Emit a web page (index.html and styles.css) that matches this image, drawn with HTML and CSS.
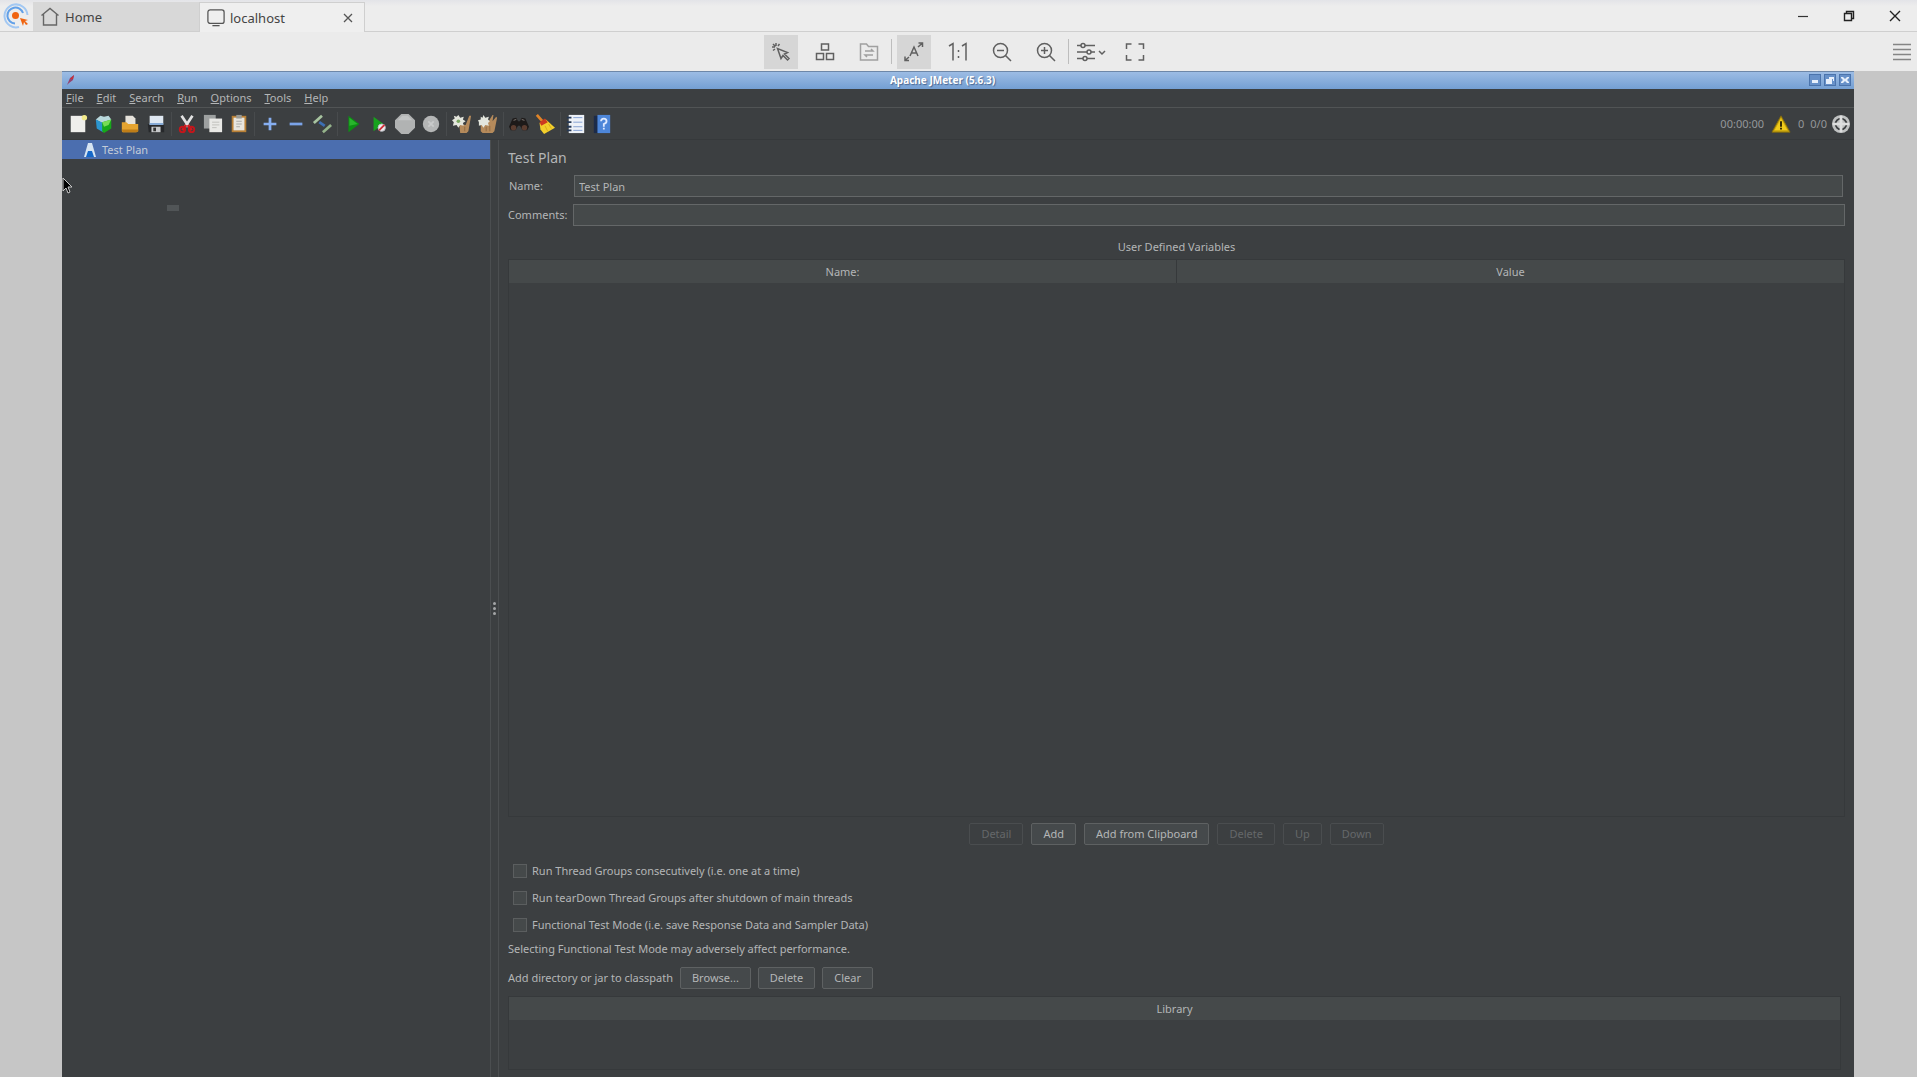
FILE: index.html
```html
<!doctype html>
<html lang="en">
  <head>
    <meta charset="UTF-8" />
    <meta name="viewport" content="width=device-width, initial-scale=1.0" />
    <title>localhost</title>
    <link rel="stylesheet" href="styles.css">
  </head>
  <body>
    <header class="tab-bar">
      <div class="app-logo">
        <svg width="28" height="28" viewBox="0 0 28 28" fill="none">
          <path d="M17 25A11.500 11.500 0 1 1 25.500 13" stroke="#a3c8f2" stroke-width="2" />
          <path d="M13 21.500A8 8 0 1 1 21 11" stroke="#62a0e8" stroke-width="2" />
          <circle cx="13.500" cy="13.500" r="3.500" fill="#f06410" />
          <path d="M18 16l8 2-3 1 3 3-2 1-2-3-1 4z" fill="#f06410" />
        </svg>
      </div>
      <nav class="tabs">
        <a class="tab home" href="#">
          <svg width="20" height="20" viewBox="0 0 20 20" fill="none" stroke="#666" stroke-width="1.400"><path d="M1.500 8.500L10 1.500l8.500 7M3.500 7v11h13V7" /></svg>
          <span>Home</span>
        </a>
        <div class="tab current">
          <svg width="18" height="18" viewBox="0 0 20 20" fill="none" stroke="#555" stroke-width="1.400"><rect x="1" y="1" width="18" height="15" rx="2.500" /><path d="M6 18.500h8" /></svg>
          <span>localhost</span>
          <button class="tab-close" aria-label="Close tab">
            <svg width="10" height="10" viewBox="0 0 10 10" stroke="#555" stroke-width="1.300"><path d="M1 1l8 8M9 1L1 9" /></svg>
          </button>
        </div>
      </nav>
      <div class="window-buttons">
        <button aria-label="Minimize"><svg width="12" height="12" viewBox="0 0 12 12" stroke="#333" stroke-width="1.200"><path d="M1 6.500h10" /></svg></button>
        <button aria-label="Restore"><svg width="12" height="12" viewBox="0 0 12 12" fill="none" stroke="#222" stroke-width="1.400"><path d="M1.500 3.500h7v7h-7zM3.500 3.500v-2h7v7h-2" /></svg></button>
        <button aria-label="Close"><svg width="12" height="12" viewBox="0 0 12 12" stroke="#222" stroke-width="1.400"><path d="M1 1l10 10M11 1L1 11" /></svg></button>
      </div>
    </header>

    <div class="remote-bar">
      <div class="remote-tools">
        <button class="remote-btn active" aria-label="Pointer">
          <svg viewBox="0 0 20 20"><path d="M6.500 6.500l3.500 10 2-3 4.500 4.500 1.500-1.500-4.500-4.500 3-1.500zM5 1v3M1 5h3M2 2l2.500 2.500M8.500 2L7 4M2 8.500L4 7" /></svg>
        </button>
        <button class="remote-btn" aria-label="Monitors">
          <svg viewBox="0 0 20 20"><path d="M6.500 2h7v6h-7zM1.500 11.500h7v6h-7zM11.500 11.500h7v6h-7z" /></svg>
        </button>
        <button class="remote-btn faded" aria-label="Transfer files">
          <svg viewBox="0 0 20 20"><path d="M1.500 2h6l2 2.500h9V18h-17zM6 9h8l-2-2M14 13H6l2 2" /></svg>
        </button>
        <span class="remote-sep"></span>
        <button class="remote-btn active" aria-label="Scale to fit">
          <svg viewBox="0 0 20 20"><path d="M6 14l4-9 4 9M7.500 11h5M14 5l4.500-4M14.500 1h4v4M5 15l-4 3.500M1 14.500v4h4" /></svg>
        </button>
        <button class="remote-btn" aria-label="Original size">
          <svg viewBox="0 0 20 20"><path d="M1 4l4-2.500v17M14 4l4-2.500v17M10.500 8v2M10.500 14v2" /></svg>
        </button>
        <button class="remote-btn" aria-label="Zoom out">
          <svg viewBox="0 0 20 20"><circle cx="8.500" cy="8.500" r="7" /><path d="M13.500 13.500l5.500 5.500M5 8.500h7" /></svg>
        </button>
        <button class="remote-btn" aria-label="Zoom in">
          <svg viewBox="0 0 20 20"><circle cx="8.500" cy="8.500" r="7" /><path d="M13.500 13.500l5.500 5.500M5 8.500h7M8.500 5v7" /></svg>
        </button>
        <span class="remote-sep"></span>
        <button class="remote-btn" aria-label="Settings">
          <svg class="wide" viewBox="0 0 30 20"><path d="M1 3.500h4M9 3.500h10M1 10h10M15 10h4M1 16.500h6M11 16.500h8M23 9l3 3 3-3" /><circle cx="7" cy="3.500" r="2" /><circle cx="13" cy="10" r="2" /><circle cx="9" cy="16.500" r="2" /></svg>
        </button>
        <button class="remote-btn" aria-label="Full screen">
          <svg viewBox="0 0 20 20"><path d="M1.500 7V2h5M13.500 2h5v5M18.500 13v5h-5M6.500 18h-5v-5" /></svg>
        </button>
      </div>
      <button class="hamburger" aria-label="Menu">
        <svg width="18" height="18" viewBox="0 0 18 18" stroke="#858585" stroke-width="1.400"><path d="M0 1.500h18M0 6.500h18M0 11.500h18M0 16.500h18" /></svg>
      </button>
    </div>

    <div class="remote-screen">
      <section class="jmeter">
        <div class="title-bar">
          <svg width="10" height="12" viewBox="0 0 10 12"><path d="M1 11L4 4 8 1 7 6 3 9z" fill="#94426e" /><path d="M4 5l4-4-1 4z" fill="#c83038" /></svg>
          <h1>Apache JMeter (5.6.3)</h1>
          <div class="title-buttons">
            <button aria-label="Minimize"><svg viewBox="0 0 8 8"><path d="M1 4h6v3H1z" /></svg></button>
            <button aria-label="Maximize"><svg viewBox="0 0 8 8"><path d="M3 1h5v4H7V3H3zM0 3h6v5H0z" /></svg></button>
            <button aria-label="Close"><svg viewBox="0 0 8 8"><path d="M0 1h2l2 2 2-2h2v1L6 4l2 2v1H6L4 5 2 7H0V6l2-2-2-2z" /></svg></button>
          </div>
        </div>

        <nav class="menu-bar">
          <a href="#"><u>F</u>ile</a>
          <a href="#"><u>E</u>dit</a>
          <a href="#"><u>S</u>earch</a>
          <a href="#"><u>R</u>un</a>
          <a href="#"><u>O</u>ptions</a>
          <a href="#"><u>T</u>ools</a>
          <a href="#"><u>H</u>elp</a>
        </nav>

        <div class="tool-bar">
          <button aria-label="New"><svg viewBox="0 0 22 22"><path d="M3 2h16v18H3z" fill="#efefec" /><circle cx="18" cy="4" r="3" fill="#f2e98a" /></svg></button>
          <button aria-label="Templates"><svg viewBox="0 0 22 22"><path d="M2 6l5-4 4 1 5-1 3 4-8 5z" fill="#b9d8dc" /><path d="M2 6l8 4v10l-7-4z" fill="#2b95cf" /><path d="M9 9l10-3v10l-8 5-2-2z" fill="#17a81a" /><path d="M9 9l10-3-3 6-5 2z" fill="#77dc55" /></svg></button>
          <button aria-label="Open"><svg viewBox="0 0 22 22"><path d="M6 2h8l3 3v8H6z" fill="#e6e3dc" /><path d="M2 9h5l2 2h11v8l-2 1H3l-1-1z" fill="#e5a430" /><path d="M2 17h18v2l-2 1H3z" fill="#bf7d17" /></svg></button>
          <button aria-label="Save"><svg viewBox="0 0 22 22"><path d="M2 11h18v9H3z" fill="#26282b" /><path d="M4 2h15v10H4z" fill="#dfe8f2" /><path d="M4 10h15v2H4z" fill="#7da5d4" /><path d="M6 14h10v6H6z" fill="#c6c8ca" /><path d="M8 15h3v4H8z" fill="#333" /></svg></button>
          <span class="tool-sep"></span>
          <button aria-label="Cut"><svg viewBox="0 0 22 22"><path d="M5 2l8 12M17 2L9 14" stroke="#e2e2e2" stroke-width="3" /><path d="M10 12l-4 6M12 12l4 6" stroke="#d01b20" stroke-width="3" /><circle cx="6" cy="17" r="3" fill="none" stroke="#c3161b" stroke-width="2" /><circle cx="16" cy="17" r="3" fill="none" stroke="#c3161b" stroke-width="2" /></svg></button>
          <button aria-label="Copy"><svg viewBox="0 0 22 22"><path d="M1 1h13v15H1z" fill="#9da0a0" /><path d="M7 5h14v15H7z" fill="#e9e9e6" /><path d="M10 9h8M10 12h8M10 15h5" stroke="#bdbdba" /></svg></button>
          <button aria-label="Paste"><svg viewBox="0 0 22 22"><path d="M3 2h16v18H3z" fill="#b98036" /><path d="M5 4h12v14H5z" fill="#e8e6df" /><path d="M8 1h6v4H8z" fill="#9a9a95" /><path d="M8 8h6M8 11h6M8 14h4" stroke="#a6a6a2" /></svg></button>
          <span class="tool-sep"></span>
          <button aria-label="Expand"><svg viewBox="0 0 22 22"><path d="M11 4v14M4 11h14" stroke="#86aef0" stroke-width="3" /></svg></button>
          <button aria-label="Collapse"><svg viewBox="0 0 22 22"><path d="M4 11h14" stroke="#7ba3e8" stroke-width="3" /></svg></button>
          <button aria-label="Toggle"><svg viewBox="0 0 22 22"><path d="M2 10l9-8" stroke="#a8c4a0" stroke-width="3" /><path d="M8 9l6 4" stroke="#3d6fb5" stroke-width="3" /><path d="M12 20l9-8" stroke="#95b38b" stroke-width="3" /></svg></button>
          <span class="tool-sep"></span>
          <button aria-label="Start"><svg viewBox="0 0 22 22"><path d="M6 2l12 9-12 9z" fill="#0d8d14" /><path d="M7 4l9 7-9 2z" fill="#28b52c" /></svg></button>
          <button aria-label="Start no pauses"><svg viewBox="0 0 22 22"><path d="M5 3l11 8-11 8z" fill="#18a11d" /><circle cx="14" cy="15" r="4" fill="#eee" stroke="#b9bcc4" /><path d="M11 18l6-6" stroke="#cf3038" stroke-width="2" /></svg></button>
          <button aria-label="Stop"><svg viewBox="0 0 22 22"><path d="M7 0h8l7 7v8l-7 7H7l-7-7V7z" fill="#b1b3b3" /><path d="M8 2h6l5 5H3z" fill="#c2c4c4" /></svg></button>
          <button aria-label="Shutdown"><svg viewBox="0 0 22 22"><circle cx="11" cy="11" r="9" fill="#b4b6b6" /><path d="M8 8l6 6M14 8l-6 6" stroke="#c9cbcb" stroke-width="2" /></svg></button>
          <span class="tool-sep"></span>
          <button aria-label="Clear"><svg viewBox="0 0 22 22"><path d="M8 11l7 1 4-10h2l-3 17-2 2H9z" fill="#b58a5b" /><path d="M14 14v5" stroke="#8f6a41" /><path d="M7 1l2 3 4-1-1 3 3 2-3 2 1 3-4-1-2 3-2-3-4 1 1-4-2-2 3-2-1-3 3 1z" fill="#e4e6dd" /><circle cx="7" cy="8" r="2" fill="#79a75f" /></svg></button>
          <button aria-label="Clear all"><svg viewBox="0 0 22 22"><path d="M3 10l8-1 5-8h1l-1 7 4-5 1 1-3 15-2 2H5l-2-2z" fill="#b58a5b" /><path d="M9 14v5M13 13v6" stroke="#8f6a41" /><path d="M6 1l2 3 4-1-1 3 2 2-2 2 1 3-4-1-2 3-2-3-3 1V9L0 7l3-1V3l2 1z" fill="#e4e6dd" /></svg></button>
          <span class="tool-sep"></span>
          <button aria-label="Search"><svg viewBox="0 0 22 22"><path d="M4 5l4-1 2 4h2l2-4 4 1 4 9-2 4h-5l-3-5h-2l-3 5H2l-2-4z" fill="#1d1a19" /><circle cx="5" cy="15" r="3" fill="#5b3d30" /><circle cx="17" cy="15" r="3" fill="#5b3d30" /><path d="M5 7l3-1M14 6l3 1" stroke="#857d78" /></svg></button>
          <button aria-label="Reset search"><svg viewBox="0 0 22 22"><path d="M2 1l7 8" stroke="#df8428" stroke-width="3" /><path d="M5 10l7-4 10 9-12 7-4-5z" fill="#f2cf2b" /><path d="M5 9l6-4 3 4-7 4z" fill="#cc3a20" /><path d="M11 13l3 6M15 11l3 5" stroke="#d6a81c" /></svg></button>
          <span class="tool-sep"></span>
          <button aria-label="Function helper"><svg viewBox="0 0 22 22"><path d="M3 1h17v20H3z" fill="#edf1f7" /><path d="M8 4h10M8 9h10M8 14h10M8 18h10" stroke="#7d9bd0" /><path d="M1 4h5M1 9h5M1 14h5M1 18h5" stroke="#263955" stroke-width="2" /></svg></button>
          <button aria-label="Help"><svg viewBox="0 0 22 22"><path d="M2 2h5v19H2z" fill="#1c2b49" /><path d="M6 1h14v20H6z" fill="#4d86d9" /><path d="M10 8q0-3 3-3t3 3q0 2-3 3v3M13 15v2" fill="none" stroke="#dfeaff" stroke-width="2" /></svg></button>

          <div class="run-status">
            <span>00:00:00</span>
            <button aria-label="Show log errors"><svg viewBox="0 0 22 22"><path d="M11 2l10 18H1z" fill="#c9a50c" stroke="#80690f" /><path d="M11 5l7 13H4z" fill="#f0cb1c" /><path d="M11 8v6M11 15v2" stroke="#251d04" stroke-width="2" /></svg></button>
            <span>0</span>
            <span class="threads">0/0</span>
            <svg viewBox="0 0 22 22"><circle cx="11" cy="11" r="10" fill="#bfc1c1" /><circle cx="11" cy="11" r="6" fill="none" stroke="#3c3f41" stroke-width="2" /><path d="M11 2v18M2 11h18" stroke="#dddede" stroke-width="3" /></svg>
          </div>
        </div>

        <div class="workspace">
          <aside class="tree">
            <div class="tree-node selected">
              <svg width="12" height="16" viewBox="0 0 12 16"><path d="M4 1h4l4 14H9L6 9l-3 6H0z" fill="#d6e4f2" /><path d="M4 9h4l2 6H2z" fill="#1668c8" /></svg>
              <span>Test Plan</span>
            </div>
            <span class="drag-ghost"></span>
            <svg class="cursor" width="12" height="18" viewBox="0 0 12 18"><path d="M1 1v13l3-3 2 5 2-1-2-5h4z" fill="#000" stroke="#c9c9c9" /></svg>
          </aside>

          <div class="divider"><i></i><i></i><i></i></div>

          <main class="editor">
            <h2>Test Plan</h2>
            <div class="field name-field">
              <label for="planName">Name:</label>
              <input type="text" id="planName" value="Test Plan" />
            </div>
            <div class="field">
              <label for="comments">Comments:</label>
              <input type="text" id="comments" />
            </div>

            <h3>User Defined Variables</h3>
            <div class="table-box variables">
              <table>
                <thead>
                  <tr>
                    <th>Name:</th>
                    <th>Value</th>
                  </tr>
                </thead>
              </table>
            </div>
            <div class="button-row">
              <button class="btn" disabled>Detail</button>
              <button class="btn">Add</button>
              <button class="btn">Add from Clipboard</button>
              <button class="btn" disabled>Delete</button>
              <button class="btn" disabled>Up</button>
              <button class="btn" disabled>Down</button>
            </div>

            <div class="options">
              <label><input type="checkbox" />Run Thread Groups consecutively (i.e. one at a time)</label>
              <label><input type="checkbox" />Run tearDown Thread Groups after shutdown of main threads</label>
              <label><input type="checkbox" />Functional Test Mode (i.e. save Response Data and Sampler Data)</label>
            </div>
            <p class="note">Selecting Functional Test Mode may adversely affect performance.</p>
            <div class="classpath">
              <span>Add directory or jar to classpath</span>
              <button class="btn">Browse...</button>
              <button class="btn">Delete</button>
              <button class="btn">Clear</button>
            </div>
            <div class="table-box library">
              <table>
                <thead>
                  <tr>
                    <th>Library</th>
                  </tr>
                </thead>
              </table>
            </div>
          </main>
        </div>
      </section>
    </div>
  </body>
</html>
```
FILE: styles.css
```css
:root {
  --chrome: #ebebeb;
  --panel: #3c3f41;
  --field: #45494a;
  --line: #4b4e50;
  --border: #5e6162;
  --text: #b4b6b7;
  --selection: #4b6eaf;
}

* {
  margin: 0;
  padding: 0;
  box-sizing: border-box;
}

body {
  font-family: "Noto Sans", "Open Sans", sans-serif;
  font-size: 11px;
  line-height: 16px;
  color: var(--text);
  background-color: #c6c6c6;
  height: 100vh;
  display: flex;
  flex-direction: column;
  overflow: hidden;
}

button {
  font: inherit;
  color: inherit;
  background: none;
  border: none;
}

a {
  color: inherit;
  text-decoration: none;
}

svg {
  display: block;
  flex: none;
}

/* viewer tabs */
.tab-bar {
  display: flex;
  height: 32px;
  flex: none;
  background: linear-gradient(#e3e4e8, #ededed 6px);
  color: #444;
  font-size: 13px;
}

.app-logo {
  width: 33px;
  padding: 2px;
  border-bottom: 1px solid #cfcfcf;
}

.tabs {
  display: flex;
  padding-top: 2px;
}

.tab {
  display: flex;
  align-items: center;
  gap: 5px;
  width: 166px;
  padding: 0 7px;
}

.home {
  background-color: #d8d8d8;
  border-bottom: 1px solid #cfcfcf;
}

.current {
  background-color: #efefef;
  border: 1px solid #cfcfcf;
  border-bottom: none;
}

.tab-close {
  margin-left: auto;
  padding: 4px;
}

.window-buttons {
  flex: 1;
  display: flex;
  justify-content: flex-end;
  align-items: center;
  gap: 34px;
  padding-right: 16px;
  border-bottom: 1px solid #cfcfcf;
}

/* viewer toolbar */
.remote-bar {
  display: flex;
  align-items: center;
  height: 39px;
  flex: none;
  padding: 0 6px;
  background-color: var(--chrome);
}

.remote-tools {
  flex: 1;
  display: flex;
  justify-content: center;
  align-items: center;
  gap: 10px;
  padding-left: 16px;
}

.remote-btn {
  display: flex;
  align-items: center;
  justify-content: center;
  width: 34px;
  height: 34px;
}

.remote-btn svg {
  width: 20px;
  height: 20px;
  fill: none;
  stroke: #606060;
  stroke-width: 1.5;
}

.remote-btn .wide {
  width: 30px;
}

.active {
  background-color: #d6d6d6;
}

.faded svg {
  stroke: #a0a0a0;
}

.remote-sep {
  width: 1px;
  height: 25px;
  margin: 0 -5px;
  background-color: #bdbdbd;
}

.hamburger {
  width: 18px;
}

/* remote desktop */
.remote-screen {
  flex: 1;
  display: flex;
  min-height: 0;
  padding: 0 63px 0 62px;
}

.jmeter {
  flex: 1;
  display: flex;
  flex-direction: column;
  min-width: 0;
  background-color: var(--panel);
}

.title-bar {
  display: flex;
  align-items: center;
  height: 18px;
  flex: none;
  padding: 0 3px 1px 4px;
  background: linear-gradient(#9cbce4, #749fd3);
  border-top: 1px solid #6d87a8;
}

.title-bar h1 {
  flex: 1;
  text-align: center;
  font-size: 10px;
  line-height: 16px;
  font-weight: 700;
  color: #fff;
  text-shadow: 1px 1px 1px #4a6892;
}

.title-buttons {
  display: flex;
  gap: 3px;
}

.title-buttons button {
  width: 12px;
  height: 12px;
  padding: 1px;
  background-color: #6791c9;
  border: 1px solid #4b74ac;
}

.title-buttons svg {
  width: 8px;
  height: 8px;
  fill: #e6effb;
}

.menu-bar {
  display: flex;
  align-items: center;
  gap: 13px;
  height: 19px;
  flex: none;
  padding-left: 4px;
  border-bottom: 1px solid #515455;
}

.tool-bar {
  display: flex;
  align-items: center;
  height: 32px;
  flex: none;
  padding: 0 3px;
  border-bottom: 1px solid #36393b;
}

.tool-bar button {
  width: 26px;
  padding: 0 3px;
}

.tool-bar svg {
  width: 20px;
  height: 20px;
}

.tool-sep {
  width: 1px;
  height: 24px;
  margin: 0 2px;
  background-color: #484b4d;
}

.run-status {
  display: flex;
  align-items: center;
  gap: 4px;
  margin-left: auto;
  color: #94979a;
}

.threads {
  margin-left: 2px;
}

.workspace {
  flex: 1;
  display: flex;
  min-height: 0;
}

.tree {
  position: relative;
  width: 428px;
  flex: none;
}

.tree-node {
  display: flex;
  align-items: center;
  gap: 6px;
  height: 19px;
  padding-left: 22px;
}

.selected {
  background-color: var(--selection);
  color: #c3cbd8;
}

.drag-ghost {
  position: absolute;
  left: 105px;
  top: 65px;
  width: 12px;
  height: 6px;
  background-color: #515557;
}

.cursor {
  position: absolute;
  left: 0;
  top: 37px;
}

.divider {
  width: 9px;
  flex: none;
  display: flex;
  flex-direction: column;
  align-items: center;
  justify-content: center;
  gap: 2px;
  border-left: 1px solid var(--line);
  border-right: 1px solid var(--line);
}

.divider i {
  width: 3px;
  height: 3px;
  border-radius: 50%;
  background-color: #a4a6a7;
}

/* test plan editor */
.editor {
  flex: 1;
  display: flex;
  flex-direction: column;
  min-width: 0;
  padding: 8px 9px 7px;
}

.editor h2 {
  font-size: 14px;
  font-weight: 400;
  line-height: 20px;
}

.editor h3 {
  margin: 13px 0 4px;
  font-size: 11px;
  font-weight: 400;
  text-align: center;
}

.field {
  display: flex;
  align-items: center;
  margin-top: 7px;
}

.field label {
  width: 65px;
}

.field input {
  flex: 1;
  height: 22px;
  padding: 0 4px;
  font: inherit;
  color: inherit;
  background-color: var(--field);
  border: 1px solid #646768;
}

.name-field {
  padding: 0 2px 0 1px;
}

.table-box {
  border: 1px solid #36393b;
}

.table-box table {
  width: 100%;
  table-layout: fixed;
  border-collapse: collapse;
}

.table-box th {
  height: 23px;
  font-weight: 400;
  background-color: var(--field);
}

.table-box th + th {
  border-left: 1px solid #36393b;
}

.variables {
  flex: 1;
}

.library {
  height: 74px;
  margin: 7px 4px 0 0;
}

.button-row {
  display: flex;
  justify-content: center;
  gap: 8px;
  margin: 6px 0 18px;
}

.btn {
  height: 22px;
  padding: 0 11px;
  line-height: 18px;
  background-color: #45494b;
  border: 1px solid var(--border);
  border-radius: 2px;
}

.btn:disabled {
  color: #65686a;
  background: none;
  border-color: #4a4d4f;
}

.options {
  display: flex;
  flex-direction: column;
  gap: 11px;
}

.options label {
  display: flex;
  align-items: center;
  gap: 5px;
  padding-left: 5px;
}

.options input {
  appearance: none;
  width: 14px;
  height: 14px;
  background-color: var(--field);
  border: 1px solid #5b5e5f;
}

.note {
  margin: 8px 0 10px;
}

.classpath {
  display: flex;
  align-items: center;
  gap: 7px;
}
```
